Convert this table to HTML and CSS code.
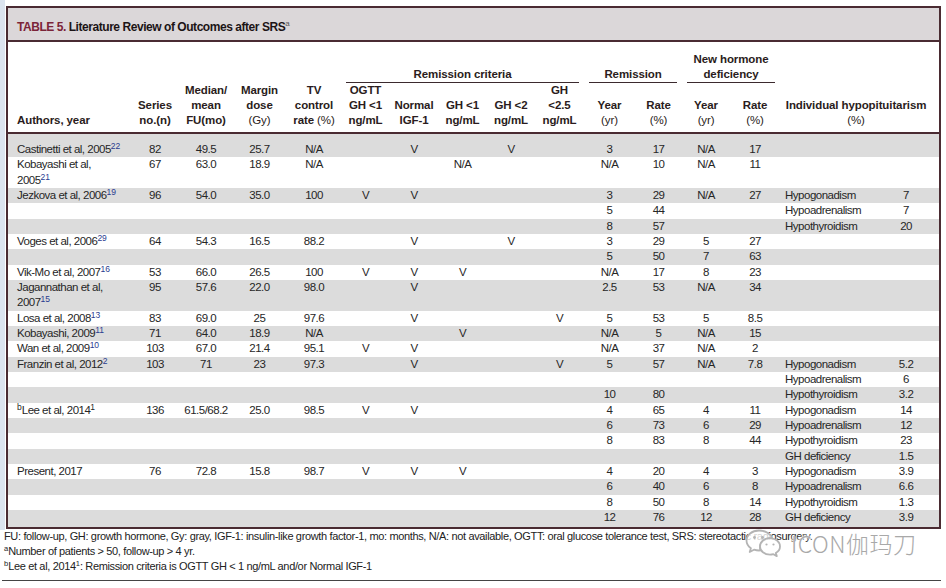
FILE: index.html
```html
<!DOCTYPE html>
<html lang="en">
<head>
<meta charset="utf-8">
<title>Table 5</title>
<link rel="stylesheet" href="styles.css">
</head>
<body>
<div class="page">
  <div class="box">
    <div class="title"><span class="tnum">TABLE 5.</span> Literature Review of Outcomes after SRS<sup class="tsup">a</sup></div>
    <table class="tbl">
      <colgroup>
        <col class="c-au"><col class="c-50"><col class="c-52"><col class="c-55"><col class="c-54">
        <col class="c-49"><col class="c-48"><col class="c-49"><col class="c-48"><col class="c-49">
        <col class="c-51"><col class="c-47"><col class="c-48"><col class="c-50"><col class="c-nm"><col class="c-vl">
      </colgroup>
      <thead>
        <tr class="h1">
          <th rowspan="2" class="hs hl">Authors, year</th>
          <th rowspan="2" class="hs">Series<br>no.(n)</th>
          <th rowspan="2" class="hs">Median/<br>mean<br>FU(mo)</th>
          <th rowspan="2" class="hs">Margin<br>dose<br><span class="u">(Gy)</span></th>
          <th rowspan="2" class="hs">TV<br>control<br>rate <span class="u">(%)</span></th>
          <th colspan="5" class="grp"><div class="gl">Remission criteria</div></th>
          <th colspan="2" class="grp"><div class="gl">Remission</div></th>
          <th colspan="2" class="grp"><div class="gl">New hormone<br>deficiency</div></th>
          <th rowspan="2" colspan="2" class="hs hind">Individual hypopituitarism<br><span class="u">(%)</span></th>
        </tr>
        <tr class="h2">
          <th class="sub">OGTT<br>GH &lt;1<br>ng/mL</th>
          <th class="sub">Normal<br>IGF-1</th>
          <th class="sub">GH &lt;1<br>ng/mL</th>
          <th class="sub">GH &lt;2<br>ng/mL</th>
          <th class="sub">GH<br>&lt;2.5<br>ng/mL</th>
          <th class="sub">Year<br><span class="u">(yr)</span></th>
          <th class="sub">Rate<br><span class="u">(%)</span></th>
          <th class="sub">Year<br><span class="u">(yr)</span></th>
          <th class="sub">Rate<br><span class="u">(%)</span></th>
        </tr>
      </thead>
      <tbody>
        <tr><td class="au">Castinetti et al, 2005<sup class="ref">22</sup></td><td>82</td><td>49.5</td><td>25.7</td><td>N/A</td><td></td><td>V</td><td></td><td>V</td><td></td><td>3</td><td>17</td><td>N/A</td><td>17</td><td class="nm"></td><td class="vl"></td></tr>
        <tr><td class="au">Kobayashi et al,<br>2005<sup class="ref">21</sup></td><td>67</td><td>63.0</td><td>18.9</td><td>N/A</td><td></td><td></td><td>N/A</td><td></td><td></td><td>N/A</td><td>10</td><td>N/A</td><td>11</td><td class="nm"></td><td class="vl"></td></tr>
        <tr><td class="au">Jezkova et al, 2006<sup class="ref">19</sup></td><td>96</td><td>54.0</td><td>35.0</td><td>100</td><td>V</td><td>V</td><td></td><td></td><td></td><td>3</td><td>29</td><td>N/A</td><td>27</td><td class="nm">Hypogonadism</td><td class="vl">7</td></tr>
        <tr><td class="au"></td><td></td><td></td><td></td><td></td><td></td><td></td><td></td><td></td><td></td><td>5</td><td>44</td><td></td><td></td><td class="nm">Hypoadrenalism</td><td class="vl">7</td></tr>
        <tr><td class="au"></td><td></td><td></td><td></td><td></td><td></td><td></td><td></td><td></td><td></td><td>8</td><td>57</td><td></td><td></td><td class="nm">Hypothyroidism</td><td class="vl">20</td></tr>
        <tr><td class="au">Voges et al, 2006<sup class="ref">29</sup></td><td>64</td><td>54.3</td><td>16.5</td><td>88.2</td><td></td><td>V</td><td></td><td>V</td><td></td><td>3</td><td>29</td><td>5</td><td>27</td><td class="nm"></td><td class="vl"></td></tr>
        <tr><td class="au"></td><td></td><td></td><td></td><td></td><td></td><td></td><td></td><td></td><td></td><td>5</td><td>50</td><td>7</td><td>63</td><td class="nm"></td><td class="vl"></td></tr>
        <tr><td class="au">Vik-Mo et al, 2007<sup class="ref">16</sup></td><td>53</td><td>66.0</td><td>26.5</td><td>100</td><td>V</td><td>V</td><td>V</td><td></td><td></td><td>N/A</td><td>17</td><td>8</td><td>23</td><td class="nm"></td><td class="vl"></td></tr>
        <tr><td class="au">Jagannathan et al,<br>2007<sup class="ref">15</sup></td><td>95</td><td>57.6</td><td>22.0</td><td>98.0</td><td></td><td>V</td><td></td><td></td><td></td><td>2.5</td><td>53</td><td>N/A</td><td>34</td><td class="nm"></td><td class="vl"></td></tr>
        <tr><td class="au">Losa et al, 2008<sup class="ref">13</sup></td><td>83</td><td>69.0</td><td>25</td><td>97.6</td><td></td><td>V</td><td></td><td></td><td>V</td><td>5</td><td>53</td><td>5</td><td>8.5</td><td class="nm"></td><td class="vl"></td></tr>
        <tr><td class="au">Kobayashi, 2009<sup class="ref">11</sup></td><td>71</td><td>64.0</td><td>18.9</td><td>N/A</td><td></td><td></td><td>V</td><td></td><td></td><td>N/A</td><td>5</td><td>N/A</td><td>15</td><td class="nm"></td><td class="vl"></td></tr>
        <tr><td class="au">Wan et al, 2009<sup class="ref">10</sup></td><td>103</td><td>67.0</td><td>21.4</td><td>95.1</td><td>V</td><td>V</td><td></td><td></td><td></td><td>N/A</td><td>37</td><td>N/A</td><td>2</td><td class="nm"></td><td class="vl"></td></tr>
        <tr><td class="au">Franzin et al, 2012<sup class="ref">2</sup></td><td>103</td><td>71</td><td>23</td><td>97.3</td><td></td><td>V</td><td></td><td></td><td>V</td><td>5</td><td>57</td><td>N/A</td><td>7.8</td><td class="nm">Hypogonadism</td><td class="vl">5.2</td></tr>
        <tr><td class="au"></td><td></td><td></td><td></td><td></td><td></td><td></td><td></td><td></td><td></td><td></td><td></td><td></td><td></td><td class="nm">Hypoadrenalism</td><td class="vl">6</td></tr>
        <tr><td class="au"></td><td></td><td></td><td></td><td></td><td></td><td></td><td></td><td></td><td></td><td>10</td><td>80</td><td></td><td></td><td class="nm">Hypothyroidism</td><td class="vl">3.2</td></tr>
        <tr><td class="au"><sup class="pre">b</sup>Lee et al, 2014<sup class="ref blk">1</sup></td><td>136</td><td>61.5/68.2</td><td>25.0</td><td>98.5</td><td>V</td><td>V</td><td></td><td></td><td></td><td>4</td><td>65</td><td>4</td><td>11</td><td class="nm">Hypogonadism</td><td class="vl">14</td></tr>
        <tr><td class="au"></td><td></td><td></td><td></td><td></td><td></td><td></td><td></td><td></td><td></td><td>6</td><td>73</td><td>6</td><td>29</td><td class="nm">Hypoadrenalism</td><td class="vl">12</td></tr>
        <tr><td class="au"></td><td></td><td></td><td></td><td></td><td></td><td></td><td></td><td></td><td></td><td>8</td><td>83</td><td>8</td><td>44</td><td class="nm">Hypothyroidism</td><td class="vl">23</td></tr>
        <tr><td class="au"></td><td></td><td></td><td></td><td></td><td></td><td></td><td></td><td></td><td></td><td></td><td></td><td></td><td></td><td class="nm">GH deficiency</td><td class="vl">1.5</td></tr>
        <tr><td class="au">Present, 2017</td><td>76</td><td>72.8</td><td>15.8</td><td>98.7</td><td>V</td><td>V</td><td>V</td><td></td><td></td><td>4</td><td>20</td><td>4</td><td>3</td><td class="nm">Hypogonadism</td><td class="vl">3.9</td></tr>
        <tr><td class="au"></td><td></td><td></td><td></td><td></td><td></td><td></td><td></td><td></td><td></td><td>6</td><td>40</td><td>6</td><td>8</td><td class="nm">Hypoadrenalism</td><td class="vl">6.6</td></tr>
        <tr><td class="au"></td><td></td><td></td><td></td><td></td><td></td><td></td><td></td><td></td><td></td><td>8</td><td>50</td><td>8</td><td>14</td><td class="nm">Hypothyroidism</td><td class="vl">1.3</td></tr>
        <tr><td class="au"></td><td></td><td></td><td></td><td></td><td></td><td></td><td></td><td></td><td></td><td>12</td><td>76</td><td>12</td><td>28</td><td class="nm">GH deficiency</td><td class="vl">3.9</td></tr>
      </tbody>
    </table>
  </div>
  <div class="notes">
    <p>FU: follow-up, GH: growth hormone, Gy: gray, IGF-1: insulin-like growth factor-1, mo: months, N/A: not available, OGTT: oral glucose tolerance test, SRS: stereotactic radiosurgery.</p>
    <p><sup class="fn">a</sup>Number of patients &gt; 50, follow-up &gt; 4 yr.</p>
    <p><sup class="fn">b</sup>Lee et al, 2014<sup class="fn">1</sup>: Remission criteria is OGTT GH &lt; 1 ng/mL and/or Normal IGF-1</p>
  </div>
  <div class="wm">
    <svg class="wm-logo" width="38" height="30" viewBox="0 0 38 30" aria-hidden="true">
      <g fill="rgba(255,255,255,0.8)" stroke="#b4b4b4" stroke-width="1.8" stroke-linejoin="round">
        <path d="M15 2.5c-7.2 0-12.5 4.6-12.5 10.1 0 3.1 1.7 5.8 4.4 7.6l-1.2 3.8 4.3-2.3c1.6.5 3.2.8 5 .8 .5 0 1 0 1.5-.1-.3-.9-.5-1.9-.5-2.9 0-5.3 5-9.5 11.1-9.5h.9C26.9 5.9 21.5 2.5 15 2.5z"/>
        <path d="M36 18.4c0-4.6-4.5-8.3-10-8.3s-10 3.7-10 8.3 4.5 8.3 10 8.3c1.2 0 2.3-.2 3.4-.5l3.4 1.9-1-3.1c2.5-1.5 4.2-3.9 4.2-6.6z"/>
      </g>
      <g fill="#b4b4b4">
        <circle cx="10.5" cy="9.5" r="1.4"/><circle cx="18.5" cy="9.5" r="1.4"/>
        <circle cx="22.5" cy="16.5" r="1.1"/><circle cx="29.5" cy="16.5" r="1.1"/>
      </g>
    </svg>
    <span class="wm-text">ICON伽玛刀</span>
  </div>
</div>
</body>
</html>
```
FILE: styles.css
```css
* { box-sizing: border-box; }
html, body { margin: 0; padding: 0; }
body {
  background: #fff linear-gradient(to right, #dce4ef 0, #dce4ef 5px, #fff 5px) 0 0 / 100% 530px no-repeat;
  font-family: "Liberation Sans", Arial, sans-serif;
  color: #262626;
}
.page {
  position: relative;
  width: 946px;
  height: 588px;
  padding-top: 6px;
  overflow: hidden;
}
.box {
  margin-left: 6px;
  width: 935px;
  border: 2px solid #4a2b32;
  background: #fff;
}
.title {
  height: 34px;
  padding: 12px 0 0 9px;
  background: #dbd7d9;
  border-bottom: 2px solid #4a2b32;
  font-size: 12px;
  line-height: 15px;
  font-weight: bold;
  letter-spacing: -0.45px;
  color: #1c1416;
  white-space: nowrap;
}
.tnum { color: #7b2438; }
.tsup { font-size: 8px; line-height: 0; vertical-align: 5px; font-weight: normal; color: #555; letter-spacing: 0; }

.tbl {
  width: 931px;
  table-layout: fixed;
  border-collapse: separate;
  border-spacing: 0;
}
.c-au { width: 122px; }
.c-50 { width: 50px; }
.c-52 { width: 52px; }
.c-55 { width: 55px; }
.c-54 { width: 54px; }
.c-49 { width: 49px; }
.c-48 { width: 48px; }
.c-51 { width: 51px; }
.c-47 { width: 47px; }
.c-nm { width: 100px; }
.c-vl { width: 59px; }

.tbl th {
  padding: 0;
  font-size: 11.5px;
  line-height: 15px;
  font-weight: bold;
  color: #2a1c20;
  text-align: center;
  white-space: nowrap;
  letter-spacing: -0.1px;
}
.tbl th .u { font-weight: normal; }
.h1 th { height: 41px; vertical-align: bottom; }
.hs { padding-bottom: 4px !important; border-bottom: 2px solid #4a2b32; }
.hl { text-align: left !important; padding-left: 9px !important; }
.hind { padding-right: 7px !important; }
.gl { margin: 0 5px; border-bottom: 1px solid #3b2a2e; }
.sub { vertical-align: bottom; padding-bottom: 4px !important; border-bottom: 2px solid #4a2b32; }

.tbl td {
  padding: 0;
  font-size: 11.5px;
  line-height: 15.33px;
  letter-spacing: -0.5px;
  text-align: center;
  vertical-align: top;
  white-space: nowrap;
  color: #262626;
}
.tbl tbody tr:nth-child(odd) td { background: #dcdcdc; }
.tbl tbody tr:first-child td { padding-top: 8px; }
.tbl tbody tr:last-child td { padding-bottom: 2px; }
.tbl td.au { text-align: left; padding-left: 9px; }
.tbl td.nm { text-align: left; padding-left: 5px; }
.tbl td.vl { padding-right: 7px; }

.ref { font-size: 8.5px; line-height: 0; vertical-align: 4px; color: #2a3b8f; letter-spacing: 0; }
.ref.blk { color: #262626; }
.pre { font-size: 8.5px; line-height: 0; vertical-align: 4px; letter-spacing: 0; }

.notes {
  margin-left: 2px;
  width: 939px;
  padding: 0 0 6px 2px;
  border-bottom: 1px solid #444;
  font-size: 11px;
  line-height: 15px;
  letter-spacing: -0.35px;
  color: #222;
}
.notes p { margin: 0; white-space: nowrap; }
.fn { font-size: 7.5px; line-height: 0; vertical-align: 4px; letter-spacing: 0; }

.wm {
  position: absolute;
  left: 744px;
  top: 528px;
  display: flex;
  align-items: center;
  gap: 9px;
}
.wm-logo { display: block; }
.wm-text {
  font-family: "Noto Sans CJK SC", "Noto Sans", sans-serif;
  font-weight: 300;
  font-size: 23px;
  line-height: 30px;
  color: #a9a9a9;
  letter-spacing: 0.5px;
  text-shadow: 0 0 2px #fff, 0 0 3px #fff, 0 0 4px #fff;
}
```
